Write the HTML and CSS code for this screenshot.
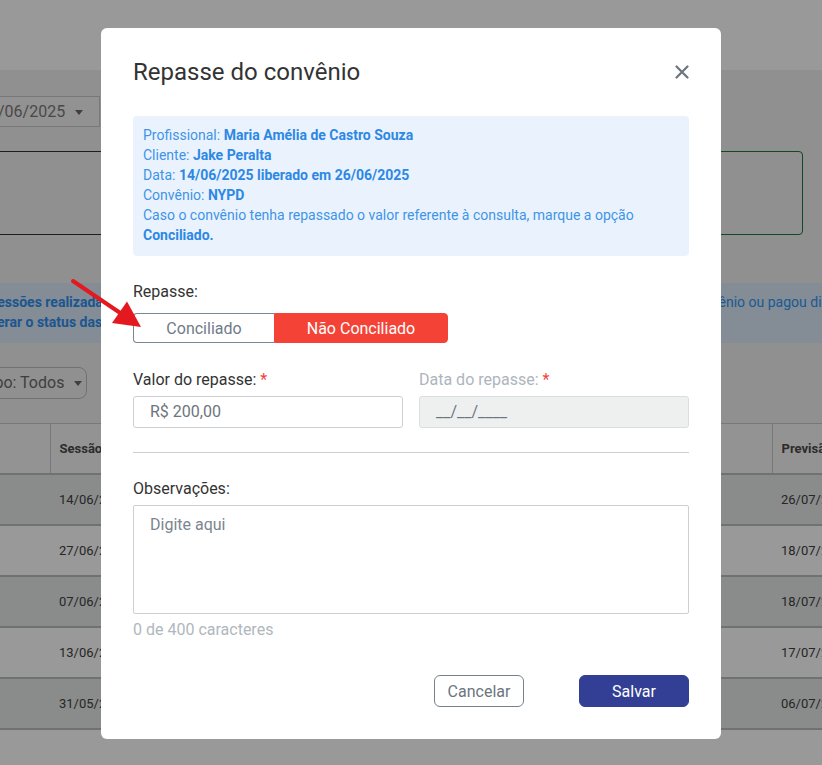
FILE: index.html
```html
<!DOCTYPE html>
<html lang="pt-BR">
<head>
    <meta charset="UTF-8">
    <meta name="viewport" content="width=device-width, initial-scale=1.0">
    <title>Repasse do convênio</title>
    <link rel="stylesheet" href="styles.css">
</head>
<body>
    <div class="page">
        <header class="topbar"></header>
        <main class="content">
            <div class="toolbar">
                <div class="date-select">01/06/2025 <span class="caret"></span></div>
            </div>
            <div class="cards">
                <div class="card card-dark"></div>
                <div class="card card-green"></div>
            </div>
            <div class="notice">
                <b>As sessões realizadas</b> por atendimentos de convênio ficam até confirmação do repasse. Informe se o cliente usou&nbsp; convênio ou pagou diretamente.<br>
                <b>e alterar o status das sessões</b> clicando no botão de repasse de cada linha.
            </div>
            <div class="filter-row">
                <div class="filter-select">Tipo: Todos <span class="caret"></span></div>
            </div>
            <div class="table-wrap">
                <table class="sessions">
                    <thead>
                        <tr>
                            <th class="col-check"></th>
                            <th class="col-date">Sessão</th>
                            <th class="col-client">Cliente</th>
                            <th class="col-value">Valor</th>
                            <th class="col-forecast">Previsão</th>
                        </tr>
                    </thead>
                    <tbody>
                        <tr><td></td><td>14/06/2025</td><td>Jake Peralta</td><td>R$ 200,00</td><td>26/07/2025</td></tr>
                        <tr><td></td><td>27/06/2025</td><td>Amy Santiago</td><td>R$ 200,00</td><td>18/07/2025</td></tr>
                        <tr><td></td><td>07/06/2025</td><td>Rosa Diaz</td><td>R$ 200,00</td><td>18/07/2025</td></tr>
                        <tr><td></td><td>13/06/2025</td><td>Charles Boyle</td><td>R$ 200,00</td><td>17/07/2025</td></tr>
                        <tr><td></td><td>31/05/2025</td><td>Terry Jeffords</td><td>R$ 200,00</td><td>06/07/2025</td></tr>
                    </tbody>
                </table>
            </div>
        </main>
    </div>

    <div class="backdrop">
        <div class="modal">
            <div class="modal-header">
                <h2 class="modal-title">Repasse do convênio</h2>
                <button class="close-btn" aria-label="Fechar">
                    <svg width="14" height="14" viewBox="0 0 14 14"><path d="M1.5 1.5 L12.5 12.5 M12.5 1.5 L1.5 12.5" stroke="#6c757d" stroke-width="2.2" stroke-linecap="round"/></svg>
                </button>
            </div>

            <div class="info-box">
                Profissional: <b>Maria Amélia de Castro Souza</b><br>
                Cliente: <b>Jake Peralta</b><br>
                Data: <b>14/06/2025 liberado em 26/06/2025</b><br>
                Convênio: <b>NYPD</b><br>
                Caso o convênio tenha repassado o valor referente à consulta, marque a opção <b>Conciliado.</b>
            </div>

            <label class="field-label">Repasse:</label>
            <div class="toggle">
                <button class="toggle-btn">Conciliado</button>
                <button class="toggle-btn active">Não Conciliado</button>
            </div>

            <div class="field-row">
                <div class="field">
                    <label class="field-label">Valor do repasse: <span class="req">*</span></label>
                    <div class="input">R$ 200,00</div>
                </div>
                <div class="field disabled">
                    <label class="field-label">Data do repasse: <span class="req">*</span></label>
                    <div class="input">__/__/____</div>
                </div>
            </div>

            <hr class="divider">

            <label class="field-label">Observações:</label>
            <div class="textarea">Digite aqui</div>
            <div class="char-count">0 de 400 caracteres</div>

            <div class="modal-footer">
                <button class="btn btn-outline">Cancelar</button>
                <button class="btn btn-primary">Salvar</button>
            </div>
        </div>
    </div>

    <svg class="pointer-arrow" width="160" height="340" viewBox="0 0 160 340">
        <line x1="73" y1="281" x2="121" y2="313.5" stroke="#e3191f" stroke-width="4" stroke-linecap="round"/>
        <polygon points="141,327 112,323 127,301.5" fill="#e3191f"/>
    </svg>
</body>
</html>
```

FILE: styles.css
```css
* {
    box-sizing: border-box;
}
body {
    margin: 0;
    font-family: Roboto, "Liberation Sans", Arial, sans-serif;
    background-color: #f1f1f1;
    overflow: hidden;
}

/* page behind the modal */
.topbar {
    height: 70px;
    background: #fff;
}
.content {
    margin-left: -30px;
    width: 860px;
}
.toolbar {
    padding-top: 26px;
}
.date-select {
    width: 130px;
    height: 31px;
    border: 1px solid #c8c8c8;
    background: #f4f4f4;
    color: #7a7a7a;
    font-size: 16px;
    line-height: 29px;
    padding-left: 9px;
    white-space: nowrap;
}
.caret {
    display: inline-block;
    width: 0;
    height: 0;
    margin-left: 6px;
    vertical-align: middle;
    border-left: 4.5px solid transparent;
    border-right: 4.5px solid transparent;
    border-top: 5px solid #6a6a6a;
}
.cards {
    display: flex;
    gap: 12px;
    margin-top: 24px;
}
.card {
    height: 84px;
    background: #f1f1f1;
}
.card-dark {
    width: 420px;
    border-top: 1px solid #333;
    border-bottom: 1px solid #333;
}
.card-green {
    width: 401px;
    border: 1.5px solid #1b7b3a;
    border-radius: 4px;
}
.notice {
    margin-top: 48px;
    height: 60px;
    background: #dce9f8;
    color: #3196f5;
    font-size: 14px;
    line-height: 20px;
    padding: 9px 0 0 0;
    white-space: nowrap;
    width: 900px;
    overflow: hidden;
}
.notice b {
    color: #2f8fee;
}
.filter-row {
    padding-top: 24px;
}
.filter-select {
    width: 117px;
    height: 32px;
    border: 1px solid #bdbdbd;
    border-radius: 8px;
    color: #6a6a6a;
    font-size: 16px;
    line-height: 30px;
    padding-left: 10px;
    white-space: nowrap;
}
.table-wrap {
    margin-top: 24px;
    background: #fff;
    height: 400px;
    margin-left: 20px;
}
.sessions {
    border-collapse: collapse;
    width: 1000px;
    font-size: 13px;
    color: #404040;
}
.sessions th {
    height: 50px;
    text-align: left;
    padding-left: 9px;
    background: #f5f5f5;
    border-top: 1px solid #c9c9c9;
    border-left: 1px solid #c9c9c9;
    border-bottom: 2px solid #b9bec0;
    color: #4a4a4a;
}
.sessions th:first-child {
    border-left: none;
}
.sessions td {
    height: 51px;
    padding: 0 0 0 9px;
    border-bottom: 2px solid #b9bec0;
}
.sessions tbody tr:nth-child(odd) td {
    background: #e6e9e9;
}
.col-check { width: 60px; }
.col-date { width: 200px; }
.col-client { width: 262px; }
.col-value { width: 260px; }

/* modal */
.backdrop {
    position: fixed;
    inset: 0;
    background: rgba(0, 0, 0, 0.4);
    display: flex;
    justify-content: center;
    align-items: flex-start;
    padding-top: 28px;
}
.modal {
    width: 620px;
    background: #fff;
    border-radius: 6px;
    padding: 28px 32px 32px;
    color: #333;
}
.modal-header {
    display: flex;
    justify-content: space-between;
    align-items: center;
    height: 32px;
}
.modal-title {
    margin: 0;
    font-size: 24px;
    font-weight: 400;
    color: #333;
}
.close-btn {
    border: none;
    background: none;
    padding: 0;
    width: 14px;
    height: 14px;
    display: flex;
}
.info-box {
    margin-top: 28px;
    background: #eaf3fd;
    border-radius: 4px;
    padding: 9px 10px 11px;
    font-size: 14px;
    line-height: 20px;
    color: #3f94e8;
}
.info-box b {
    color: #2d88e4;
}
.field-label {
    display: block;
    font-size: 16px;
    line-height: 20px;
    color: #333;
}
.info-box + .field-label {
    margin-top: 26px;
}
.req {
    color: #f44336;
}
.toggle {
    display: flex;
    margin-top: 11px;
}
.toggle-btn {
    height: 30px;
    font-family: inherit;
    font-size: 16px;
    padding: 0;
    white-space: nowrap;
    background: #fff;
    color: #6f7b87;
    border: 1px solid #7a8690;
    cursor: pointer;
}
.toggle-btn:first-child {
    border-radius: 4px 0 0 4px;
    border-right: none;
    width: 141px;
}
.toggle-btn.active {
    background: #f44336;
    border-color: #f44336;
    color: #fff;
    border-radius: 0 4px 4px 0;
    width: 174px;
}
.field-row {
    display: flex;
    gap: 16px;
    margin-top: 27px;
}
.field {
    flex: 1;
}
.input {
    margin-top: 6px;
    height: 32px;
    border: 1px solid #ccd0d3;
    border-radius: 3px;
    padding-left: 16px;
    font-size: 16px;
    line-height: 30px;
    color: #6c757d;
}
.disabled .field-label {
    color: #adb5bd;
}
.disabled .input {
    background: #eef0f0;
    border-color: #dadede;
}
.divider {
    border: none;
    border-top: 1px solid #ccd0d3;
    margin: 24px 0 26px;
}
.textarea {
    margin-top: 6px;
    height: 109px;
    border: 1px solid #ccd0d3;
    border-radius: 2px;
    padding: 9px 16px;
    font-size: 16px;
    line-height: 20px;
    color: #7b8590;
}
.char-count {
    margin-top: 6px;
    font-size: 16px;
    line-height: 20px;
    color: #b0b7bd;
}
.modal-footer {
    display: flex;
    justify-content: flex-end;
    gap: 55px;
    margin-top: 35px;
}
.btn {
    height: 32px;
    font-family: inherit;
    font-size: 16px;
    border-radius: 6px;
    cursor: pointer;
}
.btn-outline {
    width: 90px;
    background: #fff;
    border: 1px solid #75818c;
    color: #6c757d;
}
.btn-primary {
    width: 110px;
    background: #333f94;
    border: 1px solid #333f94;
    color: #fff;
}

.pointer-arrow {
    position: absolute;
    left: 0;
    top: 0;
    pointer-events: none;
}
```
